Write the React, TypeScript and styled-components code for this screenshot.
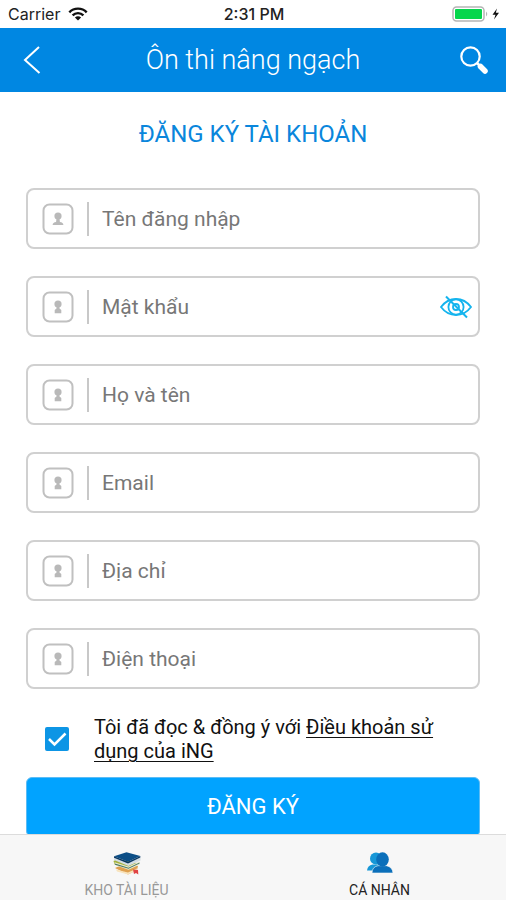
import React, { useState } from "react";
import styled, { createGlobalStyle } from "styled-components";

const GlobalStyle = createGlobalStyle`
  *, *::before, *::after { box-sizing: border-box; }
  body {
    margin: 0;
    background: #fff;
    color: #111;
    font-family: Roboto, "Noto Sans", sans-serif;
  }
  button, input { font: inherit; }
`;

const Screen = styled.div`
  display: flex;
  flex-direction: column;
  height: 100vh;
  overflow: hidden;
`;

const StatusBar = styled.div`
  flex: none;
  display: grid;
  grid-template-columns: 1fr auto 1fr;
  align-items: center;
  height: 28px;
  padding: 0 6px 0 8px;
  font-family: Inter, sans-serif;
  font-size: 16px;
  line-height: 28px;
  color: #222;
`;

const StatusGroup = styled.div<{ $end?: boolean }>`
  display: flex;
  align-items: center;
  gap: 8px;
  justify-content: ${(p) => (p.$end ? "flex-end" : "flex-start")};
`;

const Clock = styled.time`
  font-weight: 500;
`;

const Header = styled.header`
  flex: none;
  display: grid;
  grid-template-columns: 64px 1fr 64px;
  align-items: center;
  height: 64px;
  background: #0087e2;
  color: #fff;
`;

const HeaderTitle = styled.h1`
  margin: 0;
  text-align: center;
  font-size: 27px;
  line-height: 32px;
  font-weight: 300;
`;

const IconButton = styled.button`
  display: flex;
  align-items: center;
  justify-content: center;
  height: 100%;
  padding: 0;
  border: 0;
  background: none;
  color: inherit;
  cursor: pointer;
`;

const Content = styled.main`
  flex: 1;
  min-height: 0;
  padding: 26px 26px 0;
  overflow-y: auto;
  scrollbar-width: none;
`;

const FormTitle = styled.h2`
  margin: 0 0 38px;
  text-align: center;
  font-size: 24px;
  line-height: 32px;
  font-weight: 400;
  color: #0a86dc;
`;

const Fields = styled.div`
  display: flex;
  flex-direction: column;
  gap: 27px;
`;

const Field = styled.label`
  display: flex;
  align-items: center;
  height: 61px;
  padding: 0 6px 0 14px;
  border: 2px solid #d0d0d0;
  border-radius: 8px;
`;

const FieldIcon = styled.span`
  display: flex;
  padding-right: 13px;
`;

const FieldInput = styled.input`
  flex: 1;
  min-width: 0;
  height: 34px;
  padding: 0 0 0 13px;
  border: 0;
  border-left: 2px solid #c8c8c8;
  outline: 0;
  background: none;
  font-size: 21px;
  color: #333;
  &::placeholder { color: #777; opacity: 1; }
`;

const RevealButton = styled(IconButton)`
  color: #14b4ee;
`;

const Agreement = styled.div`
  display: flex;
  align-items: center;
  gap: 25px;
  padding: 26px 16px 14px 19px;
`;

const CheckBox = styled.span`
  flex: none;
  display: grid;
  width: 24px;
  height: 24px;
  > * { grid-area: 1 / 1; }
  svg { pointer-events: none; }
`;

const CheckInput = styled.input`
  appearance: none;
  margin: 0;
  border: 2px solid #0d95e5;
  border-radius: 2px;
  &:checked { background: #0d95e5; }
`;

const AgreementText = styled.label`
  font-size: 20px;
  line-height: 24px;
  a { color: inherit; text-decoration-thickness: 1px; text-underline-offset: 3px; }
`;

const SubmitButton = styled.button`
  display: block;
  width: 100%;
  height: 60px;
  padding: 0;
  border: 1px solid #5cbcf5;
  border-radius: 6px;
  background: #01a3ff;
  color: #fff;
  font-size: 22px;
  line-height: 28px;
  cursor: pointer;
`;

const TabBar = styled.nav`
  flex: none;
  display: grid;
  grid-template-columns: 1fr 1fr;
  height: 66px;
  border-top: 1px solid #dcdcdc;
  background: #f7f7f7;
`;

const Tab = styled.a<{ $active?: boolean }>`
  display: flex;
  flex-direction: column;
  align-items: center;
  gap: 6px;
  padding-top: 16px;
  font-size: 14px;
  line-height: 18px;
  text-decoration: none;
  color: ${(p) => (p.$active ? "#222" : "#999")};
`;

const WifiIcon = () => (
  <svg width="20" height="14" viewBox="0 0 20 14" fill="none" stroke="#111" strokeWidth="2.4" aria-hidden="true">
    <path d="M1.3 5.3C6 .4 14 .4 18.7 5.3" />
    <path d="M4.6 8.4c3-3 7.8-3 10.8 0" />
    <path d="M10 13.6 6.9 10.5c1.8-1.7 4.4-1.7 6.2 0Z" fill="#111" stroke="none" />
  </svg>
);

const BatteryIcon = () => (
  <svg width="48" height="16" viewBox="0 0 48 16" aria-hidden="true">
    <rect x="1" y="1" width="31" height="14" rx="3.5" fill="#fff" stroke="#b5b5b5" strokeWidth="1.5" />
    <rect x="3" y="3" width="27" height="10" rx="1" fill="#05d64c" />
    <path d="M34 5.5q2.500 2.500 0 5Z" fill="#b5b5b5" />
    <path d="M45 2.500 40.500 8.800h3L42 13.500l5-6.700h-3.200Z" fill="#111" />
  </svg>
);

const BackIcon = () => (
  <svg width="18" height="28" viewBox="0 0 18 28" fill="none" stroke="currentColor" strokeWidth="2" aria-hidden="true">
    <path d="M16 1 2 14l14.5 13" />
  </svg>
);

const SearchIcon = () => (
  <svg width="28" height="28" viewBox="0 0 28 28" fill="none" stroke="currentColor" aria-hidden="true">
    <circle cx="10.5" cy="10.5" r="9.2" strokeWidth="2.2" />
    <path d="m17 17 3 3" strokeWidth="2.5" />
    <path d="m20.500 20.500 4.500 4.500" strokeWidth="5.500" strokeLinecap="round" />
  </svg>
);

const BadgeIcon = ({ person }: { person?: boolean }) => (
  <svg width="32" height="32" viewBox="0 0 32 32" fill="#b9b9b9" aria-hidden="true">
    <rect x="1.5" y="1.5" width="29" height="29" rx="6" fill="none" stroke="#c0c0c0" strokeWidth="2" />
    <circle cx="16" cy="13" r="3.6" />
    {person ? (
      <path d="M14.500 15h3l.4 4q3.300.3 3.500 3H10.600q.2-2.700 3.500-3Z" />
    ) : (
      <path d="M14.500 15h3v2.500l1.800 1.500v3.200h-6.600V19l1.800-1.500Z" />
    )}
  </svg>
);

const EyeOffIcon = () => (
  <svg width="32" height="24" viewBox="0 0 32 24" fill="none" stroke="currentColor" strokeWidth="1.800" aria-hidden="true">
    <path d="M1 12Q7 4 16 4T31 12Q25 20 16 20T1 12Z" />
    <circle cx="16" cy="12" r="7.600" />
    <circle cx="16" cy="12" r="3" />
    <path d="m6 1.500 21 21" strokeWidth="2" />
  </svg>
);

const CheckIcon = () => (
  <svg width="24" height="24" viewBox="0 0 24 24" fill="none" stroke="#fff" strokeWidth="2.500" aria-hidden="true">
    <path d="m4 12 5.500 5.500L20.500 6.500" />
  </svg>
);

const BooksIcon = () => (
  <svg width="28" height="24" viewBox="0 0 28 24" aria-hidden="true">
    <path d="m2 17 7-3 16 1-1 4-9 4.500Z" fill="#dfa04f" />
    <path d="m3 18.500 12 3 9-4v2l-9 4-11-3Z" fill="#f8e3bc" />
    <path d="m20 18.500 5 .5.300 4.500-2.300-1.500-2 1Z" fill="#e04444" />
    <path d="m.5 10 4-2 22 4.500-10.500 6L1.500 13.500Z" fill="#a3b23c" />
    <path d="m1.500 11.200 14 4.300 11-5v3.300l-11 5-13.500-4.800Z" fill="#eceacf" />
    <path d="m2 12.500 13.500 4.300 11-5.200v1l-11 5.200L2 13.700Z" fill="#4a7a66" />
    <path d="m1 5.500 14 6.500 12.500-6v3.500L15.500 15 1 9Z" fill="#d3dde3" />
    <path d="m1 5.200 12.500-4L27.300 5 15 10.800Z" fill="#0c4e86" />
    <path d="M1 5.200 15 10.800 27.300 5v1.500L15 12.500 1 6.700Z" fill="#083763" />
  </svg>
);

const PeopleIcon = () => (
  <svg width="28" height="24" viewBox="0 0 28 24" aria-hidden="true">
    <g fill="#1797d7">
      <circle cx="10" cy="7.500" r="6" />
      <path d="M1 19.500q.5-5 5.500-6h7v6Z" />
    </g>
    <path d="M6 22q0-6 6-7.300h8.500q6 1.300 6.500 7.300Z" fill="#0b6fba" stroke="#f7f7f7" strokeWidth=".6" />
    <ellipse cx="16.500" cy="8.500" rx="6.300" ry="7.200" fill="#0b6fba" />
  </svg>
);

const fields = [
  { name: "username", label: "Tên đăng nhập", type: "text" },
  { name: "password", label: "Mật khẩu", type: "password" },
  { name: "fullname", label: "Họ và tên", type: "text" },
  { name: "email", label: "Email", type: "email" },
  { name: "address", label: "Địa chỉ", type: "text" },
  { name: "phone", label: "Điện thoại", type: "tel" },
];

export default function App() {
  const [revealed, setRevealed] = useState(false);
  const [agreed, setAgreed] = useState(true);

  return (
    <Screen>
      <GlobalStyle />
      <StatusBar>
        <StatusGroup>
          <span>Carrier</span>
          <WifiIcon />
        </StatusGroup>
        <Clock>2:31 PM</Clock>
        <StatusGroup $end>
          <BatteryIcon />
        </StatusGroup>
      </StatusBar>
      <Header>
        <IconButton type="button" aria-label="Quay lại">
          <BackIcon />
        </IconButton>
        <HeaderTitle>Ôn thi nâng ngạch</HeaderTitle>
        <IconButton type="button" aria-label="Tìm kiếm">
          <SearchIcon />
        </IconButton>
      </Header>
      <Content>
        <form onSubmit={(e) => e.preventDefault()}>
          <FormTitle>ĐĂNG KÝ TÀI KHOẢN</FormTitle>
          <Fields>
            {fields.map((f) => (
              <Field key={f.name}>
                <FieldIcon>
                  <BadgeIcon person={f.name === "username"} />
                </FieldIcon>
                <FieldInput
                  name={f.name}
                  type={f.type === "password" && revealed ? "text" : f.type}
                  placeholder={f.label}
                  aria-label={f.label}
                />
                {f.type === "password" && (
                  <RevealButton type="button" aria-label="Hiện mật khẩu" onClick={() => setRevealed(!revealed)}>
                    <EyeOffIcon />
                  </RevealButton>
                )}
              </Field>
            ))}
          </Fields>
          <Agreement>
            <CheckBox>
              <CheckInput id="agree" type="checkbox" checked={agreed} onChange={(e) => setAgreed(e.target.checked)} />
              {agreed && <CheckIcon />}
            </CheckBox>
            <AgreementText htmlFor="agree">
              Tôi đã đọc &amp; đồng ý với <a href="#terms">Điều khoản sử dụng của iNG</a>
            </AgreementText>
          </Agreement>
          <SubmitButton type="submit">ĐĂNG KÝ</SubmitButton>
        </form>
      </Content>
      <TabBar>
        <Tab href="#library">
          <BooksIcon />
          KHO TÀI LIỆU
        </Tab>
        <Tab href="#profile" $active>
          <PeopleIcon />
          CÁ NHÂN
        </Tab>
      </TabBar>
    </Screen>
  );
}
